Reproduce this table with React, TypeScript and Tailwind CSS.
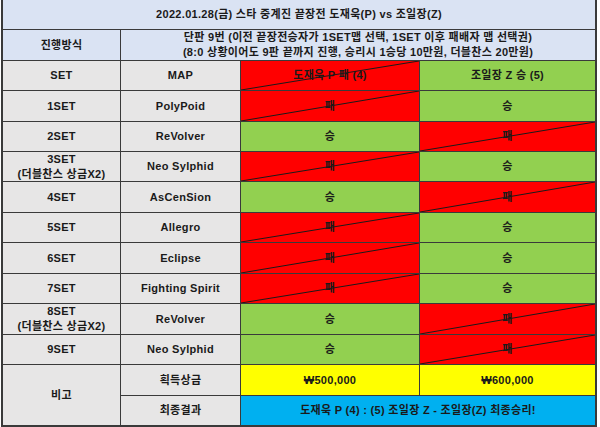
import React from "react";

const BORDER = "border-[#3a3a3a]";

function Diag() {
  return (
    <svg className="absolute inset-0 h-full w-full pointer-events-none" preserveAspectRatio="none" viewBox="0 0 100 100">
      <line x1="0" y1="100" x2="100" y2="0" stroke="#1a1a1a" strokeWidth="1" vectorEffect="non-scaling-stroke" />
    </svg>
  );
}

type CellProps = {
  children?: React.ReactNode;
  className?: string;
  diag?: boolean;
  last?: boolean;
};

function Cell({ children, className = "", diag, last }: CellProps) {
  return (
    <div
      className={`relative flex items-center justify-center text-center border-b ${BORDER} ${last ? "border-r-2" : "border-r"} ${className}`}
    >
      {diag && <Diag />}
      <span className="relative leading-[15px]">{children}</span>
    </div>
  );
}

const LAV = "bg-[#dae3f3]";
const GRAY = "bg-[#e7e6e6]";
const RED = "bg-[#ff0000]";
const GREEN = "bg-[#92d050]";
const YEL = "bg-[#ffff00]";
const BLUE = "bg-[#00b0f0]";

const rows: { set: React.ReactNode; map: string; p: "승" | "패" }[] = [
  { set: "1SET", map: "PolyPoid", p: "패" },
  { set: "2SET", map: "ReVolver", p: "승" },
  { set: <>3SET<br />(더블찬스 상금X2)</>, map: "Neo Sylphid", p: "패" },
  { set: "4SET", map: "AsCenSion", p: "승" },
  { set: "5SET", map: "Allegro", p: "패" },
  { set: "6SET", map: "Eclipse", p: "패" },
  { set: "7SET", map: "Fighting Spirit", p: "패" },
  { set: <>8SET<br />(더블찬스 상금X2)</>, map: "ReVolver", p: "승" },
  { set: "9SET", map: "Neo Sylphid", p: "승" },
];

export default function App() {
  return (
    <div className="w-[600px] h-[427px] bg-white [font-family:'Liberation_Sans','Noto_Sans_CJK_KR',sans-serif] text-[11px] tracking-[0.3px] font-bold text-[#1a1a1a]">
      <div
        className={`ml-px w-[596px] grid grid-cols-[118px_120px_179px_177px] grid-rows-[30px_31px_30px_31px_30px_30px_31px_30px_31px_30px_31px_30px_31px_31px] border-l-2 ${BORDER}`}
      >
        <Cell className={`col-span-4 ${LAV}`} last>
          2022.01.28(금) 스타 중계진 끝장전 도재욱(P) vs 조일장(Z)
        </Cell>

        <Cell className={LAV}>진행방식</Cell>
        <Cell className={`col-span-3 ${LAV}`} last>
          단판 9번 (이전 끝장전승자가 1SET맵 선택, 1SET 이후 패배자 맵 선택권)
          <br />
          (8:0 상황이어도 9판 끝까지 진행, 승리시 1승당 10만원, 더블찬스 20만원)
        </Cell>

        <Cell className={GRAY}>SET</Cell>
        <Cell className={GRAY}>MAP</Cell>
        <Cell className={RED} diag>도재욱 P 패 (4)</Cell>
        <Cell className={GREEN} last>조일장 Z 승 (5)</Cell>

        {rows.map((r, i) => (
          <React.Fragment key={i}>
            <Cell className={GRAY}>{r.set}</Cell>
            <Cell className={GRAY}>{r.map}</Cell>
            {r.p === "패" ? (
              <>
                <Cell className={RED} diag>패</Cell>
                <Cell className={GREEN} last>승</Cell>
              </>
            ) : (
              <>
                <Cell className={GREEN}>승</Cell>
                <Cell className={RED} diag last>패</Cell>
              </>
            )}
          </React.Fragment>
        ))}

        <Cell className={`row-span-2 border-b-2 ${GRAY}`}>비고</Cell>
        <Cell className={GRAY}>획득상금</Cell>
        <Cell className={YEL}>₩500,000</Cell>
        <Cell className={YEL} last>₩600,000</Cell>

        <Cell className={`border-b-2 ${GRAY}`}>최종결과</Cell>
        <Cell className={`col-span-2 border-b-2 ${BLUE}`} last>
          도재욱 P (4) : (5) 조일장 Z - 조일장(Z) 최종승리!
        </Cell>
      </div>
    </div>
  );
}
